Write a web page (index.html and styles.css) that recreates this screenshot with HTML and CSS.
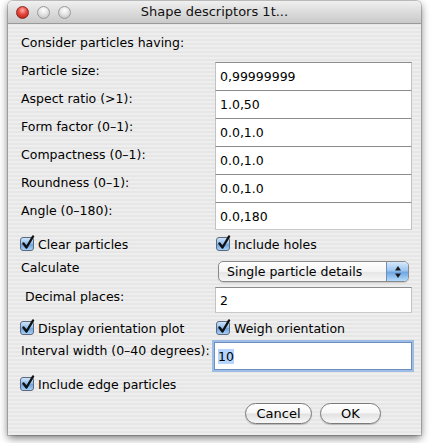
FILE: index.html
```html
<!DOCTYPE html>
<html>
<head>
<meta charset="utf-8">
<link rel="stylesheet" href="styles.css">
</head>
<body>
<div class="window">
  <div class="titlebar">
    <div class="lights">
      <span class="light red"></span>
      <span class="light gray"></span>
      <span class="light gray"></span>
    </div>
    <div class="title">Shape descriptors 1t...</div>
  </div>
  <div class="content">
    <div class="heading">Consider particles having:</div>
    <div class="fields">
      <div class="frow"><span class="label">Particle size:</span><span class="field">0,99999999</span></div>
      <div class="frow"><span class="label">Aspect ratio (&gt;1):</span><span class="field">1.0,50</span></div>
      <div class="frow"><span class="label">Form factor (0–1):</span><span class="field">0.0,1.0</span></div>
      <div class="frow"><span class="label">Compactness (0–1):</span><span class="field">0.0,1.0</span></div>
      <div class="frow"><span class="label">Roundness (0–1):</span><span class="field">0.0,1.0</span></div>
      <div class="frow"><span class="label">Angle (0–180):</span><span class="field last">0.0,180</span></div>
    </div>
    <div class="crow">
      <label class="check"><span class="box"><svg viewBox="0 0 16 16" width="16" height="16"><path d="M3.5 8.5 L6.5 12.5 L13 1.5" fill="none" stroke="#111" stroke-width="2.4" stroke-linecap="round" stroke-linejoin="round"/></svg></span>Clear particles</label>
      <label class="check"><span class="box"><svg viewBox="0 0 16 16" width="16" height="16"><path d="M3.5 8.5 L6.5 12.5 L13 1.5" fill="none" stroke="#111" stroke-width="2.4" stroke-linecap="round" stroke-linejoin="round"/></svg></span>Include holes</label>
    </div>
    <div class="calc">
      <span class="label">Calculate</span>
      <div class="select"><span class="seltext">Single particle details</span><span class="arrows"><svg viewBox="0 0 8 14" width="8" height="14"><path d="M4 1 L7 5.5 L1 5.5 Z M4 13 L7 8.5 L1 8.5 Z" fill="#1a1a1a"/></svg></span></div>
    </div>
    <div class="decimal">
      <span class="label indent">Decimal places:</span>
      <span class="field single">2</span>
    </div>
    <div class="crow">
      <label class="check"><span class="box"><svg viewBox="0 0 16 16" width="16" height="16"><path d="M3.5 8.5 L6.5 12.5 L13 1.5" fill="none" stroke="#111" stroke-width="2.4" stroke-linecap="round" stroke-linejoin="round"/></svg></span>Display orientation plot</label>
      <label class="check"><span class="box"><svg viewBox="0 0 16 16" width="16" height="16"><path d="M3.5 8.5 L6.5 12.5 L13 1.5" fill="none" stroke="#111" stroke-width="2.4" stroke-linecap="round" stroke-linejoin="round"/></svg></span>Weigh orientation</label>
    </div>
    <div class="interval">
      <span class="label">Interval width (0–40 degrees):</span>
      <span class="field focus"><span class="sel">10</span></span>
    </div>
    <div class="crow">
      <label class="check"><span class="box"><svg viewBox="0 0 16 16" width="16" height="16"><path d="M3.5 8.5 L6.5 12.5 L13 1.5" fill="none" stroke="#111" stroke-width="2.4" stroke-linecap="round" stroke-linejoin="round"/></svg></span>Include edge particles</label>
    </div>
    <div class="buttons">
      <span class="btn cancel">Cancel</span>
      <span class="btn ok">OK</span>
    </div>
  </div>
</div>
</body>
</html>
```
FILE: styles.css
```css
html, body {
  margin: 0;
  padding: 0;
  background: #ffffff;
}
body {
  font-family: "DejaVu Sans", "Liberation Sans", sans-serif;
  font-size: 12.5px;
  color: #000;
  width: 431px;
  height: 443px;
  overflow: hidden;
}
.window {
  margin: 1px 0 0 8px;
  width: 413px;
  height: 434px;
  border-radius: 5px 5px 0 0;
  box-shadow: 0 3px 9px rgba(0,0,0,0.55), 0 0 0 1px rgba(0,0,0,0.18);
  background: repeating-linear-gradient(to bottom, #eeeeee 0, #eeeeee 2px, #e6e6e6 2px, #e6e6e6 4px);
  overflow: hidden;
}
.titlebar {
  height: 22px;
  border-bottom: 1px solid #9a9a9a;
  background: linear-gradient(to bottom, #f0f0f0 0%, #dcdcdc 50%, #c9c9c9 100%);
  display: flex;
  align-items: center;
  position: relative;
  border-radius: 5px 5px 0 0;
}
.lights {
  display: flex;
  gap: 8px;
  padding-left: 8px;
  padding-top: 1px;
}
.light {
  width: 13px;
  height: 13px;
  border-radius: 50%;
  box-sizing: border-box;
}
.light.red {
  background: radial-gradient(circle at 50% 30%, #ffb0a8 0%, #e8463c 45%, #a81a12 100%);
  border: 1px solid #8a2a22;
}
.light.gray {
  background: radial-gradient(circle at 50% 30%, #ffffff 0%, #e4e4e4 45%, #b8b8b8 100%);
  border: 1px solid #9a9a9a;
}
.title {
  position: absolute;
  left: 0;
  right: 0;
  top: 0;
  line-height: 22px;
  text-align: center;
  font-size: 13px;
  color: #111;
  pointer-events: none;
}
.content {
  padding: 0 9px 0 13px;
}
.heading {
  height: 38px;
  line-height: 16px;
  padding-top: 11px;
  box-sizing: border-box;
}
.fields {
  display: flex;
  flex-direction: column;
}
.frow {
  display: grid;
  grid-template-columns: 194px 197px;
  height: 28px;
}
.label {
  line-height: 16px;
  padding-top: 1px;
  white-space: nowrap;
}
.label.indent {
  padding-left: 4px;
}
.field {
  box-sizing: border-box;
  background: #fff;
  border-top: 1px solid #8c8c8c;
  border-left: 1px solid #c2c2c2;
  border-right: 1px solid #c2c2c2;
  padding-left: 4px;
  display: flex;
  align-items: center;
  height: 28px;
}
.field.last {
  border-bottom: 1px solid #c8c8c8;
}
.crow {
  display: grid;
  grid-template-columns: 196px 195px;
  height: 28px;
  align-items: center;
}
.check {
  display: flex;
  align-items: center;
  gap: 4px;
  white-space: nowrap;
}
.box {
  width: 14px;
  height: 14px;
  margin-left: -1px;
  border-radius: 3px;
  box-sizing: border-box;
  border: 1px solid #5a6a80;
  background: linear-gradient(to bottom, #cde3fa 0%, #8dbbec 50%, #6ea3e0 55%, #a8d0f6 100%);
  position: relative;
  flex: none;
}
.box svg {
  position: absolute;
  left: -1px;
  top: -3px;
}
.calc {
  display: grid;
  grid-template-columns: 197px 191px;
  height: 26px;
}
.calc .label {
  padding-top: 2px;
}
.select {
  margin-top: 3px;
  height: 21px;
  box-sizing: border-box;
  border: 1px solid #8a8a8a;
  border-radius: 5px;
  background: linear-gradient(to bottom, #ffffff 0%, #f4f4f4 50%, #e6e6e6 55%, #f6f6f6 100%);
  display: flex;
  align-items: center;
  overflow: hidden;
  box-shadow: 0 1px 1px rgba(0,0,0,0.15);
}
.seltext {
  flex: 1;
  padding-left: 8px;
  white-space: nowrap;
}
.arrows {
  width: 21px;
  height: 100%;
  border-left: 1px solid #6f8fb8;
  background: linear-gradient(to bottom, #d6e8fb 0%, #9cc6f0 45%, #6fa6e3 55%, #b6dbfb 100%);
  display: flex;
  align-items: center;
  justify-content: center;
  flex: none;
}
.decimal {
  display: grid;
  grid-template-columns: 194px 197px;
  height: 32px;
}
.decimal .label {
  padding-top: 5px;
}
.field.single {
  margin-top: 3px;
  height: 26px;
  border-bottom: 1px solid #c8c8c8;
}
.decimal + .crow {
  height: 24px;
}
.interval {
  display: grid;
  grid-template-columns: 193px 198px;
  height: 32px;
}
.interval .label {
  padding-top: 3px;
}
.field.focus {
  margin-top: 2px;
  height: 28px;
  border: 1px solid #6d8fbf;
  box-shadow: 0 0 0 2px #9ebde6;
  padding-left: 3px;
}
.sel {
  background: #b5d5ff;
  line-height: 15px;
}
.interval + .crow {
  height: 24px;
}
.buttons {
  display: flex;
  justify-content: flex-end;
  gap: 8px;
  padding-right: 31px;
  margin-top: 7px;
}
.btn {
  height: 21px;
  box-sizing: border-box;
  border: 1px solid #7a7a7a;
  border-radius: 11px;
  background: linear-gradient(to bottom, #ffffff 0%, #f6f6f6 45%, #e2e2e2 55%, #f8f8f8 100%);
  display: flex;
  align-items: center;
  justify-content: center;
  font-size: 13px;
  box-shadow: 0 1px 1px rgba(0,0,0,0.2);
}
.btn.cancel { width: 67px; }
.btn.ok { width: 61px; }
```
